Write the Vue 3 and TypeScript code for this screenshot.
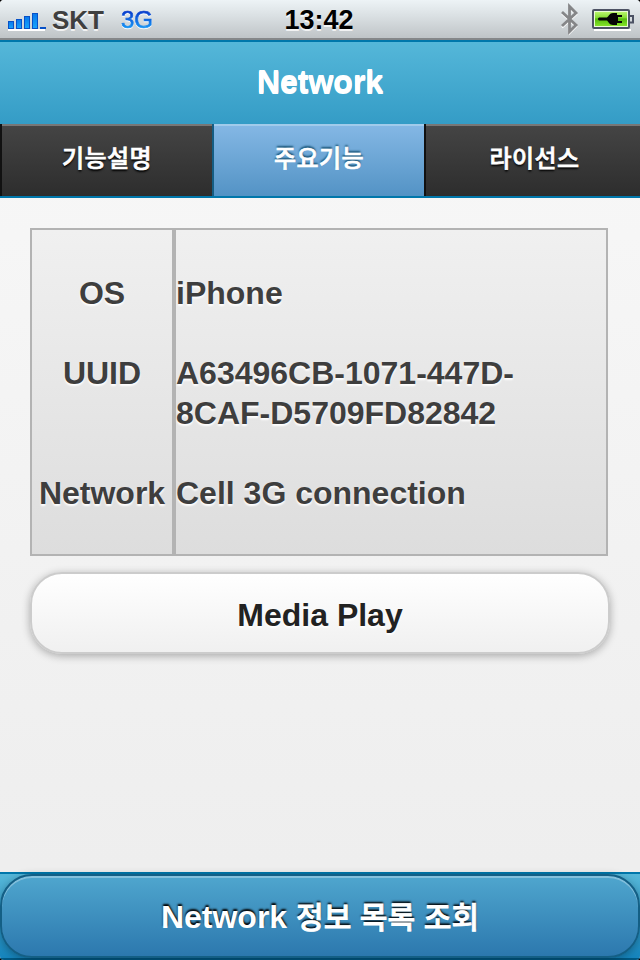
<script setup lang="ts">
import { ref } from 'vue'

interface InfoRow {
  label: string
  value: string
}

const tabs: string[] = ['기능설명', '주요기능', '라이선스']
const activeTab = ref<number>(1)
const rows: InfoRow[] = [
  { label: 'OS', value: 'iPhone' },
  { label: 'UUID', value: 'A63496CB-1071-447D-8CAF-D5709FD82842' },
  { label: 'Network', value: 'Cell 3G connection' },
]
</script>

<template>
  <div class="screen">
    <div class="status">
      <div class="carrier">
        <svg class="signal" width="40" height="20" viewBox="0 0 40 20">
          <defs>
            <linearGradient id="bar" x1="0" y1="0" x2="0" y2="1">
              <stop offset="0" stop-color="#0878ec" />
              <stop offset="1" stop-color="#16a4fc" />
            </linearGradient>
          </defs>
          <path d="M1 18h37" stroke="#fff" stroke-width="2" />
          <g fill="url(#bar)" stroke="#0751c7" stroke-width="1">
            <rect x="1.5" y="9.500" width="5" height="7" />
            <rect x="9.500" y="7.500" width="5" height="9" />
            <rect x="17.500" y="4.500" width="5" height="12" />
            <rect x="25.500" y="1.500" width="5" height="15" />
          </g>
          <path d="M33 16h6" stroke="#0751c7" stroke-width="2" />
        </svg>
        <span class="operator">SKT</span>
        <span class="radio">3G</span>
      </div>
      <time class="clock">13:42</time>
      <div class="indicators">
        <svg class="bluetooth" width="20" height="32" viewBox="0 0 20 32">
          <path d="M2 9.500 16 22.500 9.500 29V4l6.500 6.500L2 23.500" fill="none" stroke="#fff" stroke-width="2.200" transform="translate(0 1)" />
          <path d="M2 9 16 22 9.500 28.500V3.500l6.500 6.500L2 23" fill="none" stroke="#858688" stroke-width="2.800" />
        </svg>
        <svg class="battery" width="44" height="24" viewBox="0 0 44 24">
          <defs>
            <linearGradient id="charge" x1="0" y1="0" x2="0" y2="1">
              <stop offset="0" stop-color="#b9f56c" />
              <stop offset=".4" stop-color="#85dc35" />
              <stop offset=".5" stop-color="#55bb0c" />
              <stop offset="1" stop-color="#83e32a" />
            </linearGradient>
          </defs>
          <path d="M2 22h37" stroke="#fff" stroke-width="2" />
          <rect x="1" y="2" width="36" height="18" rx="1" fill="#eafbd6" stroke="#4c5264" stroke-width="2" />
          <rect x="3" y="4" width="32" height="14" fill="url(#charge)" />
          <path d="M38 8h3v6.500h-3" fill="none" stroke="#4c5264" stroke-width="2" />
          <path d="M7 9.500h8c1.500-1 2.500-4.500 6-4.500h4v2h5v2h-4v4h4v2h-5v2h-4c-3.500 0-4.500-3-6-4.500H7l-1-1v-1z" fill="#050505" />
        </svg>
      </div>
    </div>

    <header class="header">
      <h1 class="title">Network</h1>
    </header>

    <nav class="tabs">
      <button
        v-for="(tab, i) in tabs"
        :key="tab"
        class="tab"
        :class="{ active: i === activeTab }"
        @click="activeTab = i"
      >{{ tab }}</button>
    </nav>

    <main class="content">
      <dl class="info">
        <template v-for="row in rows" :key="row.label">
          <dt>{{ row.label }}</dt>
          <dd>{{ row.value }}</dd>
        </template>
      </dl>
      <button class="media">Media Play</button>
    </main>

    <footer class="footer">
      <button class="lookup">Network <span class="ko">정보 목록 조회</span></button>
    </footer>
  </div>
</template>

<style>
body {
  margin: 0;
  background: #000;
}
</style>

<style scoped>
.screen {
  box-sizing: border-box;
  width: 640px;
  height: 960px;
  display: flex;
  flex-direction: column;
  overflow: hidden;
  font-family: "Liberation Sans", "Noto Sans CJK KR", sans-serif;
  background: linear-gradient(#f9f9f9, #eee 90%);
  border-radius: 4px;
}
button {
  box-sizing: border-box;
  margin: 0;
  padding: 0;
  font-family: inherit;
}
.status {
  box-sizing: border-box;
  height: 40px;
  flex: none;
  display: grid;
  grid-template-columns: 1fr auto 1fr;
  background: linear-gradient(#edf3f6, #dbe1e4 40%, #bfc4c7);
  border-bottom: 2px solid #858789;
  line-height: 40px;
  font-weight: bold;
  text-shadow: 0 2px 0 rgba(255, 255, 255, .75);
}
.carrier {
  display: flex;
  padding-left: 7px;
}
.signal {
  margin-top: 12px;
}
.operator {
  margin-left: 5px;
  font-size: 26px;
  color: #3f3f3f;
}
.radio {
  margin-left: 17px;
  font-size: 24px;
  font-weight: normal;
  background: linear-gradient(#0634c8 25%, #18a0fa 75%);
  -webkit-background-clip: text;
  background-clip: text;
  color: transparent;
  -webkit-text-stroke: .7px transparent;
  text-shadow: none;
  filter: drop-shadow(0 1px 0 #fff);
}
.clock {
  padding-right: 2px;
  font-size: 27px;
  color: #000;
}
.indicators {
  display: flex;
  justify-content: flex-end;
  padding-right: 4px;
}
.bluetooth {
  margin: 3px 12px 0 0;
}
.battery {
  margin-top: 8px;
}
.header {
  box-sizing: border-box;
  height: 84px;
  flex: none;
  border-top: 2px solid #0077ab;
  background: linear-gradient(#55b7d9, #349cc6);
}
.title {
  margin: 0;
  font-size: 32px;
  line-height: 83px;
  text-align: center;
  color: #fff;
  text-shadow: 0 -2px 0 #fff, 0 -1px 0 #fff;
}
.tabs {
  box-sizing: border-box;
  height: 74px;
  flex: none;
  display: grid;
  grid-template-columns: 212px 212px 216px;
  border-bottom: 2px solid #0077ab;
}
.tab {
  border: 0;
  border-left: 2px solid #111;
  box-shadow: inset 0 2px #777;
  background: linear-gradient(#454545, #2d2d2d);
  color: #fff;
  font-size: 24px;
  letter-spacing: .4px;
  line-height: 36px;
  padding-bottom: 3px;
  font-weight: 500;
  -webkit-text-stroke: .7px #fff;
  text-shadow: 0 2px 2px #000;
}
.tab:last-child {
  padding-left: 3px;
}
.tab.active {
  border-left-color: #155d83;
  box-shadow: inset 0 2px #a1cbeb;
  background: linear-gradient(#85b8e5, #5393c5);
  text-shadow: 0 -2px 2px #145072;
}
.content {
  flex: 1;
  padding: 30px 30px 0;
}
.info {
  box-sizing: border-box;
  width: 578px;
  height: 328px;
  margin: 0;
  padding: 43px 0 0;
  display: grid;
  grid-template-columns: 144px 1fr;
  grid-template-rows: 80px 120px 40px;
  border: 2px solid #b3b3b3;
  background:
    linear-gradient(#b3b3b3, #b3b3b3) 140px 0 / 4px 100% no-repeat,
    linear-gradient(#f0f0f0, #ddd);
  font-size: 32px;
  line-height: 40px;
  font-weight: bold;
  color: #3e3e3e;
  text-shadow: 0 2px 2px #fff;
}
.info dt {
  width: 140px;
  text-align: center;
}
.info dd {
  margin: 0;
  width: 400px;
}
.media {
  display: block;
  width: 580px;
  height: 82px;
  margin-top: 16px;
  padding-top: 5px;
  border: 2px solid #ccc;
  border-radius: 32px;
  background: linear-gradient(#fff, #f0f0f0);
  background-clip: padding-box;
  box-shadow: 0 2px 8px rgba(0, 0, 0, .3);
  font-size: 32px;
  font-weight: bold;
  color: #222;
  text-shadow: 0 2px 2px #fff;
}
.footer {
  box-sizing: border-box;
  height: 88px;
  flex: none;
  border-top: 2px solid #0077ab;
  border-bottom: 2px solid #005984;
  background: linear-gradient(#55b7d9, #1685bd);
}
.lookup {
  display: block;
  width: 640px;
  height: 84px;
  padding-top: 3px;
  border: 2px solid #145f85;
  border-radius: 32px;
  background: linear-gradient(#4fa6ce, #2c78ae);
  box-shadow: inset 0 2px rgba(255, 255, 255, .3), 0 2px 8px rgba(0, 0, 0, .3);
  font-size: 32px;
  line-height: 44px;
  font-weight: bold;
  color: #fff;
  text-shadow: 0 -2px 2px #000;
}
.ko {
  font-size: 30px;
  font-weight: 500;
  letter-spacing: .1px;
  -webkit-text-stroke: .9px #fff;
}
</style>
